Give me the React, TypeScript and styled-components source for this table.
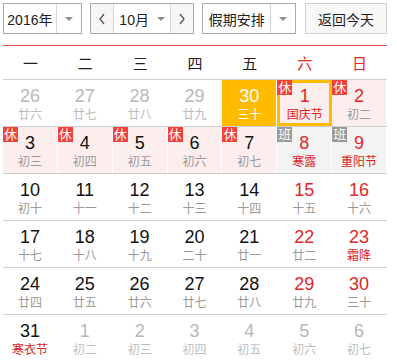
import React from 'react';
import styled, { createGlobalStyle, css } from 'styled-components';

const GlobalStyle = createGlobalStyle`
  body {
    margin: 0;
    background: #fff;
    font-family: 'Liberation Sans', Arial, 'Noto Sans CJK SC', sans-serif;
  }
`;

type Tone = 'normal' | 'weekend' | 'faded' | 'today';
type Mark = 'rest' | 'work' | undefined;

type Day = {
  num: number;
  lunar: string;
  tone: Tone;
  festival?: boolean;
  mark?: Mark;
  selected?: boolean;
};

const weekDays = ['一', '二', '三', '四', '五', '六', '日'];

// 2016年10月
const rows: Day[][] = [
  [
    { num: 26, lunar: '廿六', tone: 'faded' },
    { num: 27, lunar: '廿七', tone: 'faded' },
    { num: 28, lunar: '廿八', tone: 'faded' },
    { num: 29, lunar: '廿九', tone: 'faded' },
    { num: 30, lunar: '三十', tone: 'today' },
    { num: 1, lunar: '国庆节', tone: 'weekend', festival: true, mark: 'rest', selected: true },
    { num: 2, lunar: '初二', tone: 'weekend', mark: 'rest' },
  ],
  [
    { num: 3, lunar: '初三', tone: 'normal', mark: 'rest' },
    { num: 4, lunar: '初四', tone: 'normal', mark: 'rest' },
    { num: 5, lunar: '初五', tone: 'normal', mark: 'rest' },
    { num: 6, lunar: '初六', tone: 'normal', mark: 'rest' },
    { num: 7, lunar: '初七', tone: 'normal', mark: 'rest' },
    { num: 8, lunar: '寒露', tone: 'weekend', festival: true, mark: 'work' },
    { num: 9, lunar: '重阳节', tone: 'weekend', festival: true, mark: 'work' },
  ],
  [
    { num: 10, lunar: '初十', tone: 'normal' },
    { num: 11, lunar: '十一', tone: 'normal' },
    { num: 12, lunar: '十二', tone: 'normal' },
    { num: 13, lunar: '十三', tone: 'normal' },
    { num: 14, lunar: '十四', tone: 'normal' },
    { num: 15, lunar: '十五', tone: 'weekend' },
    { num: 16, lunar: '十六', tone: 'weekend' },
  ],
  [
    { num: 17, lunar: '十七', tone: 'normal' },
    { num: 18, lunar: '十八', tone: 'normal' },
    { num: 19, lunar: '十九', tone: 'normal' },
    { num: 20, lunar: '二十', tone: 'normal' },
    { num: 21, lunar: '廿一', tone: 'normal' },
    { num: 22, lunar: '廿二', tone: 'weekend' },
    { num: 23, lunar: '霜降', tone: 'weekend', festival: true },
  ],
  [
    { num: 24, lunar: '廿四', tone: 'normal' },
    { num: 25, lunar: '廿五', tone: 'normal' },
    { num: 26, lunar: '廿六', tone: 'normal' },
    { num: 27, lunar: '廿七', tone: 'normal' },
    { num: 28, lunar: '廿八', tone: 'normal' },
    { num: 29, lunar: '廿九', tone: 'weekend' },
    { num: 30, lunar: '三十', tone: 'weekend' },
  ],
  [
    { num: 31, lunar: '寒衣节', tone: 'normal', festival: true },
    { num: 1, lunar: '初二', tone: 'faded' },
    { num: 2, lunar: '初三', tone: 'faded' },
    { num: 3, lunar: '初四', tone: 'faded' },
    { num: 4, lunar: '初五', tone: 'faded' },
    { num: 5, lunar: '初六', tone: 'faded' },
    { num: 6, lunar: '初七', tone: 'faded' },
  ],
];

const Wrap = styled.div`
  width: 384px;
  padding: 3px 0 0 3px;
`;

const Toolbar = styled.div`
  display: flex;
  height: 31px;
  margin-bottom: 11px;
`;

const Select = styled.div<{ $w: number; $gap?: number }>`
  display: flex;
  width: ${(p) => p.$w}px;
  height: 31px;
  box-sizing: border-box;
  border: 1px solid #a9a9a9;
  margin-right: ${(p) => p.$gap ?? 8}px;
  background: #fff;
  font-size: 14px;
  color: #222;
`;

const SelectLabel = styled.div`
  flex: 1;
  display: flex;
  align-items: center;
  justify-content: center;
`;

const ArrowBox = styled.div<{ $w: number }>`
  width: ${(p) => p.$w}px;
  border-left: 1px solid #d6d6d6;
  display: flex;
  align-items: center;
  justify-content: center;
`;

const Caret = styled.span`
  width: 0;
  height: 0;
  border-left: 4px solid transparent;
  border-right: 4px solid transparent;
  border-top: 4px solid #8c8c8c;
`;

const NavBtn = styled.div<{ $side: 'left' | 'right' }>`
  width: 22px;
  display: flex;
  align-items: center;
  justify-content: center;
  background: #f6f6f6;
  ${(p) =>
    p.$side === 'left'
      ? css`border-right: 1px solid #d6d6d6;`
      : css`border-left: 1px solid #d6d6d6;`}
`;

const MonthLabel = styled.div`
  flex: 1;
  display: flex;
  align-items: center;
  justify-content: center;
  gap: 8px;
`;

const TodayBtn = styled.div`
  width: 82px;
  height: 31px;
  box-sizing: border-box;
  border: 1px solid #d0d0d0;
  background: #f7f7f7;
  display: flex;
  align-items: center;
  justify-content: center;
  font-size: 14px;
  color: #222;
`;

const Table = styled.div`
  border-top: 1px solid #e5514b;
`;

const HeadRow = styled.div`
  display: grid;
  grid-template-columns: repeat(7, 1fr);
  height: 33px;
  border-bottom: 1px solid #cfcfcf;
`;

const HeadCell = styled.div<{ $red: boolean }>`
  display: flex;
  align-items: center;
  justify-content: center;
  font-size: 15px;
  color: ${(p) => (p.$red ? '#e02828' : '#222')};
`;

const Row = styled.div<{ $last: boolean }>`
  display: grid;
  grid-template-columns: repeat(7, 1fr);
  height: 46px;
  border-bottom: ${(p) => (p.$last ? 'none' : '1px solid #cfcfcf')};
`;

const cellBg = (d: Day) => {
  if (d.tone === 'today') return '#ffbb00';
  if (d.mark === 'rest') return '#fdeeee';
  if (d.mark === 'work') return '#f3f3f3';
  return '#fff';
};

const Cell = styled.div<{ $bg: string; $selected: boolean }>`
  position: relative;
  box-sizing: border-box;
  background: ${(p) => p.$bg};
  border-right: 1px solid #fff;
  text-align: center;
  padding-top: ${(p) => (p.$selected ? 3 : 6)}px;
  ${(p) =>
    p.$selected &&
    css`
      border: 3px solid #ffbb00;
    `}
`;

const numColor: Record<Tone, string> = {
  normal: '#111',
  weekend: '#e02828',
  faded: '#b8b8b8',
  today: '#fff',
};

const Num = styled.div<{ $tone: Tone }>`
  font-size: 18px;
  line-height: 21px;
  color: ${(p) => numColor[p.$tone]};
`;

const Lunar = styled.div<{ $tone: Tone; $festival: boolean }>`
  font-size: 12px;
  line-height: 16px;
  color: ${(p) =>
    p.$tone === 'today'
      ? '#fff'
      : p.$festival
        ? '#dd1c1c'
        : p.$tone === 'faded'
          ? '#bdbdbd'
          : '#999'};
`;

const Badge = styled.span<{ $kind: 'rest' | 'work' }>`
  position: absolute;
  top: 0;
  left: 0;
  width: 15px;
  height: 15px;
  background: ${(p) => (p.$kind === 'rest' ? '#f2403a' : '#999')};
  color: #fff;
  font-size: 13px;
  line-height: 15px;
  text-align: center;
`;

const SelectedBadge = styled(Badge)`
  top: -3px;
  left: -3px;
`;

const Chevron = ({ dir }: { dir: 'left' | 'right' }) => (
  <svg width="8" height="12" viewBox="0 0 8 12">
    <path
      d={dir === 'left' ? 'M6 1 L2 6 L6 11' : 'M2 1 L6 6 L2 11'}
      fill="none"
      stroke="#555"
      strokeWidth="1.3"
    />
  </svg>
);

const DayCell: React.FC<{ day: Day }> = ({ day }) => {
  const selected = !!day.selected;
  const BadgeTag = selected ? SelectedBadge : Badge;
  return (
    <Cell $bg={cellBg(day)} $selected={selected}>
      {day.mark && <BadgeTag $kind={day.mark}>{day.mark === 'rest' ? '休' : '班'}</BadgeTag>}
      <Num $tone={day.tone}>{day.num}</Num>
      <Lunar $tone={day.tone} $festival={!!day.festival}>
        {day.lunar}
      </Lunar>
    </Cell>
  );
};

const App: React.FC = () => {
  return (
    <>
      <GlobalStyle />
      <Wrap>
        <Toolbar>
          <Select $w={79}>
            <SelectLabel>2016年</SelectLabel>
            <ArrowBox $w={24}>
              <Caret />
            </ArrowBox>
          </Select>
          <Select $w={105}>
            <NavBtn $side="left">
              <Chevron dir="left" />
            </NavBtn>
            <MonthLabel>
              10月
              <Caret />
            </MonthLabel>
            <NavBtn $side="right">
              <Chevron dir="right" />
            </NavBtn>
          </Select>
          <Select $w={94} $gap={9}>
            <SelectLabel>假期安排</SelectLabel>
            <ArrowBox $w={24}>
              <Caret />
            </ArrowBox>
          </Select>
          <TodayBtn>返回今天</TodayBtn>
        </Toolbar>
        <Table>
          <HeadRow>
            {weekDays.map((w, i) => (
              <HeadCell key={w} $red={i >= 5}>
                {w}
              </HeadCell>
            ))}
          </HeadRow>
          {rows.map((r, i) => (
            <Row key={i} $last={i === rows.length - 1}>
              {r.map((d, j) => (
                <DayCell key={j} day={d} />
              ))}
            </Row>
          ))}
        </Table>
      </Wrap>
    </>
  );
};

export default App;
